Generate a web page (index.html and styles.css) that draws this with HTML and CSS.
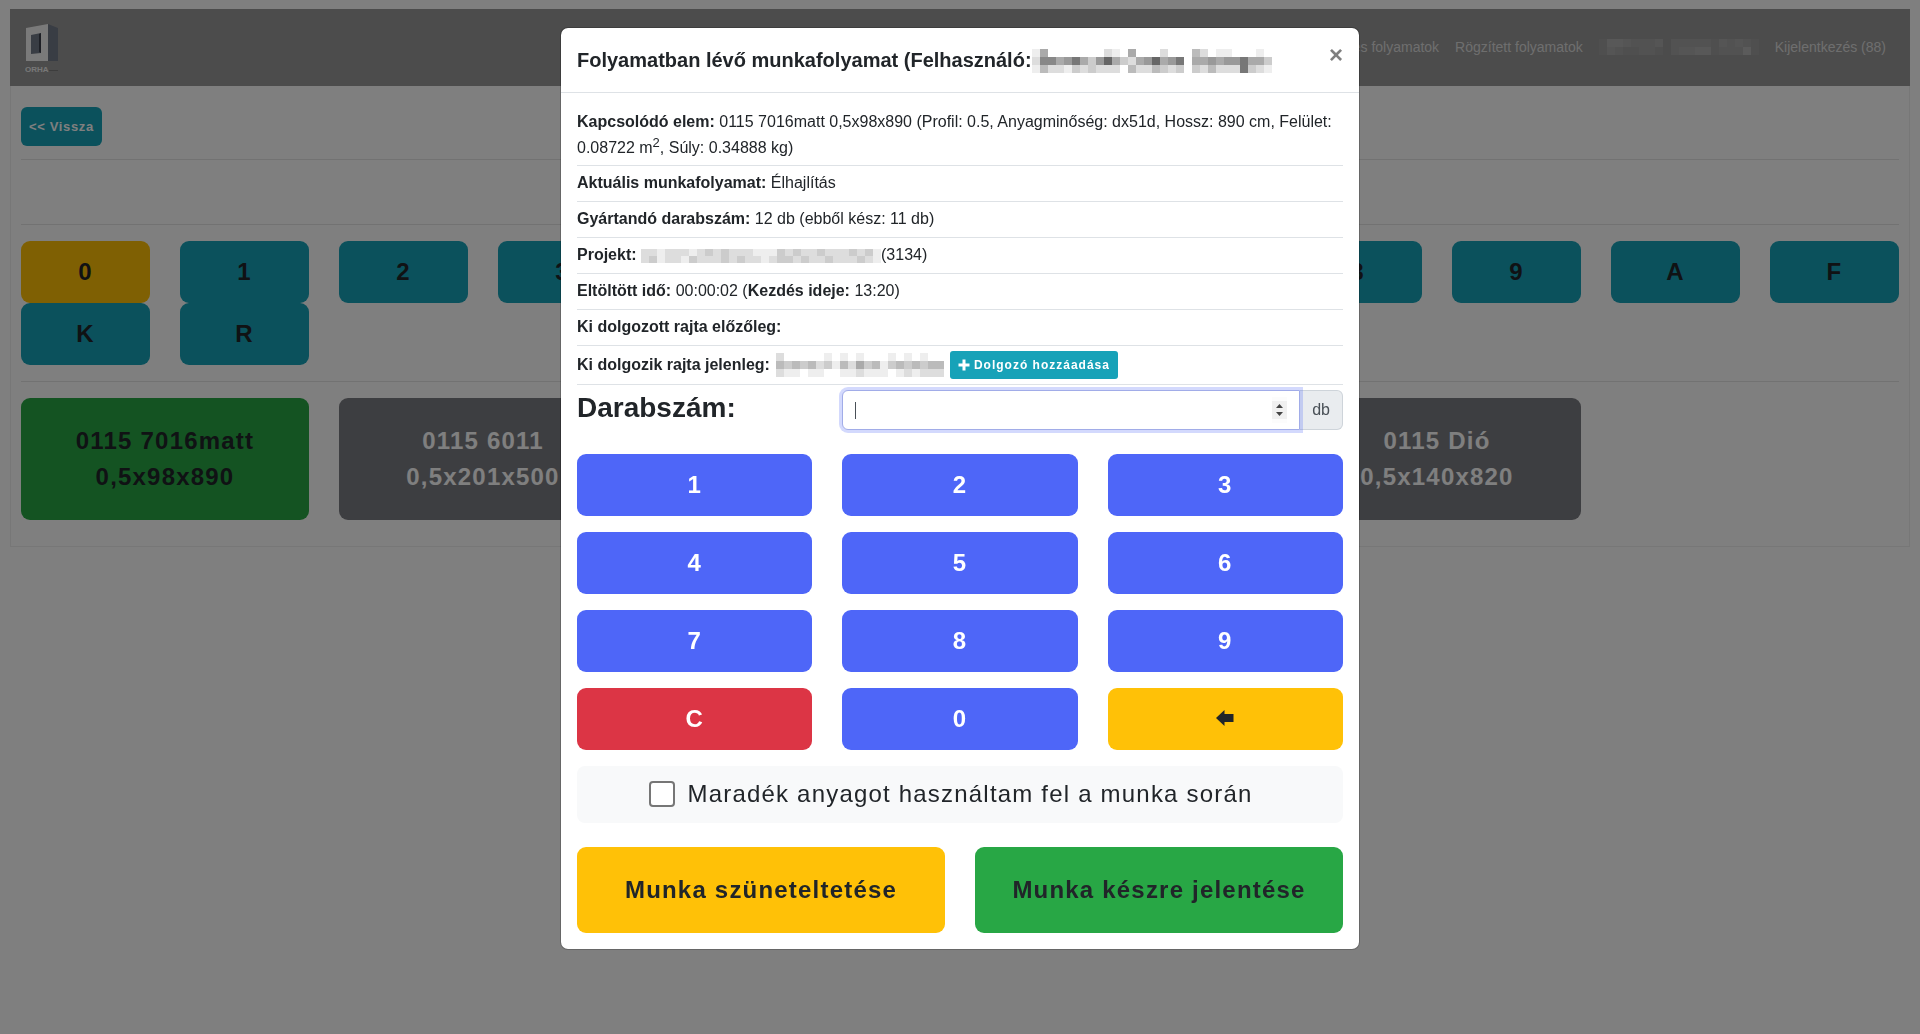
FILE: index.html
```
<!DOCTYPE html>
<html lang="hu">
<head>
<meta charset="utf-8">
<title>ORHA – Folyamatok</title>
<link rel="stylesheet" href="styles.css">
</head>
<body>
<div class="page">
  <header class="navbar">
    <a href="#" class="brand" aria-label="ORHA">
      <svg width="36" height="54" viewBox="0 0 36 54">
        <path fill="#f4f4f4" d="M1 7 23 3v37H1z"/>
        <path fill="#737b88" d="M23 3 33 7v33H23z"/>
        <path fill="#737b88" d="M6 14 16 12v20L6 33z"/>
        <path fill="#3c414d" d="M14 13 16 12v20l-2-1z"/>
        <text x="0" y="51" class="brand-name">ORHA</text>
        <path fill="#7b7b7b" d="M24 49h9v1h-9z"/>
      </svg>
    </a>
    <nav class="nav">
      <a href="#">Függőben lévő és folyamatok</a>
      <a href="#">Rögzített folyamatok</a>
      <svg class="mosaic" width="160" height="16" viewBox="0 0 20 2" preserveAspectRatio="none" data-rows="8bba999a7999998a9a98|8a98899879aabb8999c8" data-mode="nav"></svg>
      <a href="#">Kijelentkezés (88)</a>
    </nav>
  </header>
  <main class="panel">
    <button type="button" class="btn back">&lt;&lt; Vissza</button>
    <hr>
    <div class="spacer"></div>
    <hr class="loose">
    <div class="keys">
      <button type="button" class="btn tile active">0</button>
      <button type="button" class="btn tile">1</button>
      <button type="button" class="btn tile">2</button>
      <button type="button" class="btn tile">3</button>
      <button type="button" class="btn tile">4</button>
      <button type="button" class="btn tile">5</button>
      <button type="button" class="btn tile">6</button>
      <button type="button" class="btn tile">7</button>
      <button type="button" class="btn tile">8</button>
      <button type="button" class="btn tile">9</button>
      <button type="button" class="btn tile">A</button>
      <button type="button" class="btn tile">F</button>
      <button type="button" class="btn tile">K</button>
      <button type="button" class="btn tile">R</button>
    </div>
    <hr class="loose">
    <div class="jobs">
      <button type="button" class="btn job current">0115 7016matt<br>0,5x98x890</button>
      <button type="button" class="btn job">0115 6011<br>0,5x201x500</button>
      <button type="button" class="btn job">0115 6011<br>0,5x201x500</button>
      <button type="button" class="btn job">0115 Dió<br>0,5x140x820</button>
      <button type="button" class="btn job">0115 Dió<br>0,5x140x820</button>
    </div>
  </main>
</div>

<div class="overlay">
  <div class="modal" role="dialog" aria-modal="true" aria-labelledby="title">
    <div class="modal-head">
      <h5 id="title">Folyamatban lévő munkafolyamat (Felhasználó:</h5>
      <svg class="mosaic" width="240" height="24" viewBox="0 0 30 3" preserveAspectRatio="none" data-rows="eafffffffdefafffdfffbdfeefffef|d88a97ac96acda96a97faa9a997aac|ebddecdcdddfbddbcdcfcdbddd7cde"></svg>
      <button type="button" class="close" aria-label="Bezárás">×</button>
    </div>
    <div class="modal-body">
      <div class="rows">
        <p><b>Kapcsolódó elem:</b> 0115 7016matt 0,5x98x890 (Profil: 0.5, Anyagminőség: dx51d, Hossz: 890 cm, Felület: 0.08722 m<sup>2</sup>, Súly: 0.34888 kg)</p>
        <p><b>Aktuális munkafolyamat:</b> Élhajlítás</p>
        <p><b>Gyártandó darabszám:</b> 12 db (ebből kész: 11 db)</p>
        <p><b>Projekt:</b> <svg class="mosaic" width="240" height="14" viewBox="0 0 30 2" preserveAspectRatio="none" data-rows="ddedddedcdcdddeeecdcddcdddcdce|dceddecdddcdcddedccdcddcdddcde"></svg>(3134)</p>
        <p><b>Eltöltött idő:</b> 00:00:02 (<b>Kezdés ideje:</b> 13:20)</p>
        <p><b>Ki dolgozott rajta előzőleg:</b></p>
        <p class="workers"><b>Ki dolgozik rajta jelenleg:</b>
          <svg class="mosaic" width="168" height="24" viewBox="0 0 21 3" preserveAspectRatio="none" data-rows="dfffffefefefffefefeff|bcbcbdcebdacbecbcbcbb|deefeeffeedeeefededdd"></svg>
          <button type="button" class="btn add"><svg width="12" height="12" viewBox="0 0 12 12"><path fill="#fff" d="M4.500 0.500h3v4H11.500v3H7.500V11.500h-3V7.500H0.500v-3h4z"/></svg>Dolgozó hozzáadása</button></p>
      </div>
      <div class="grid amount">
        <label for="qty">Darabszám:</label>
        <div class="group">
          <div class="field">
            <input id="qty" type="number" autofocus>
            <svg class="spin" width="15" height="18" viewBox="0 0 15 18"><path fill="#f0f0f0" d="M0 0h15v18H0z"/><path fill="#444" d="M4 7h7L7.500 3zM4 11h7l-3.500 4z"/></svg>
          </div>
          <span class="unit">db</span>
        </div>
      </div>
      <div class="grid pad">
        <button type="button" class="btn key">1</button>
        <button type="button" class="btn key">2</button>
        <button type="button" class="btn key">3</button>
        <button type="button" class="btn key">4</button>
        <button type="button" class="btn key">5</button>
        <button type="button" class="btn key">6</button>
        <button type="button" class="btn key">7</button>
        <button type="button" class="btn key">8</button>
        <button type="button" class="btn key">9</button>
        <button type="button" class="btn key clear">C</button>
        <button type="button" class="btn key">0</button>
        <button type="button" class="btn key erase" aria-label="Törlés"><svg width="18" height="18" viewBox="0 0 18 18"><path fill="#212529" d="M0 9 8.500 1v4H17.500v8H8.500v4z"/></svg></button>
      </div>
      <label class="leftover"><input type="checkbox">Maradék anyagot használtam fel a munka során</label>
      <div class="actions">
        <button type="button" class="btn action pause">Munka szüneteltetése</button>
        <button type="button" class="btn action done">Munka készre jelentése</button>
      </div>
    </div>
  </div>
</div>
<script src="script.js"></script>
</body>
</html>
```
FILE: styles.css
```
* { box-sizing: border-box; }
body {
  margin: 0;
  background: #fff;
  color: #212529;
  font: 16px/26px "Liberation Sans", Arial, sans-serif;
}
.page { padding: 9px 10px; }
.navbar {
  display: flex;
  justify-content: space-between;
  align-items: center;
  height: 77px;
  padding: 0 24px 0 15px;
  background: #999;
}
.brand { display: flex; }
.brand-name { font: bold 8px "Liberation Sans", Arial, sans-serif; fill: #eee; }
.nav { display: flex; align-items: center; gap: 16px; padding-bottom: 2px; font-size: 14px; }
.nav a { color: #ddd; text-decoration: none; }
.panel {
  padding: 21px 10px 26px;
  border: 1px solid #eee;
  border-top: 0;
}
hr { height: 1px; margin: 13px 0 0; border: 0; background: #e5e5e5; }
.spacer { height: 48px; }
hr.loose { margin: 16px 0; }
.btn {
  border: 0;
  border-radius: 9px;
  padding: 0;
  font-family: inherit;
  font-weight: bold;
  letter-spacing: .05em;
  color: #fff;
  cursor: pointer;
}
.back { display: block; padding: 0 8px; height: 39px; font-size: 13px; background: #17a2b8; border-radius: 6px; }
.keys, .jobs { display: grid; grid-template-columns: repeat(12, 1fr); column-gap: 30px; }
.tile { height: 62px; font-size: 24px; color: #212529; background: #17a2b8; }
.tile.active { background: #ffc107; }
.job { grid-column: span 2; height: 122px; font-size: 24px; line-height: 36px; background: #7b7c82; }
.job.current { color: #212529; background: #28a745; }

.overlay {
  position: fixed;
  inset: 0;
  overflow: auto;
  padding: 27px 16px;
  background: rgba(0, 0, 0, .5);
}
.modal {
  max-width: 800px;
  margin: 0 auto;
  border: 1px solid rgba(0, 0, 0, .2);
  border-radius: 8px;
  background: #fff;
  background-clip: padding-box;
}
.modal-head {
  display: flex;
  padding: 16px 16px 15px;
  border-bottom: 1px solid #dee2e6;
  align-items: center;
}
h5 { margin: 0; font-size: 20px; line-height: 33px; }
.mosaic { display: inline-block; flex: none; vertical-align: middle; shape-rendering: crispEdges; }
.close {
  margin-left: auto;
  align-self: flex-start;
  border: 0;
  padding: 0;
  background: none;
  color: #7f7f7f;
  font: bold 24px/22px "Liberation Sans", Arial, sans-serif;
}
.modal-body { padding: 16px; }
.rows p { margin: 0; padding: 4px 0 5px; border-bottom: 1px solid #dee2e6; }
.rows p:first-child { padding: 0 0 4px; }
.rows .workers { display: flex; align-items: center; gap: 6px; height: 39px; }
sup { font-size: 13px; line-height: 0; }
.add {
  display: flex;
  align-items: center;
  gap: 4px;
  height: 28px;
  padding: 0 8px;
  font-size: 12px;
  letter-spacing: 1px;
  background: #17a2b8;
  border-radius: 3px;
}
.grid { display: grid; grid-template-columns: repeat(3, 1fr); column-gap: 30px; }
.amount { padding-top: 5px; }
.amount label { font-size: 28px; font-weight: bold; line-height: 36px; }
.group { grid-column: span 2; display: flex; height: 40px; }
.field { position: relative; flex: 1; display: flex; z-index: 1; }
.field input {
  flex: 1;
  min-width: 0;
  padding: 6px 12px;
  border: 1px solid #a1ace8;
  border-radius: 6px 0 0 6px;
  font: inherit;
  color: #495057;
  outline: 0;
  box-shadow: 0 0 0 3px rgba(78, 102, 248, .25);
  background: linear-gradient(#495057, #495057) 12px 50% / 1px 17px no-repeat #fff;
  caret-color: transparent;
  appearance: textfield;
}
.spin { position: absolute; right: 13px; top: 11px; pointer-events: none; }
.unit {
  padding: 6px 12px;
  border: 1px solid #ced4da;
  border-left: 0;
  border-radius: 0 6px 6px 0;
  color: #495057;
  background: #e9ecef;
}
.pad { padding-top: 24px; row-gap: 16px; }
.key { height: 62px; font-size: 24px; background: #4e66f8; }
.key.clear { background: #dc3545; }
.key.erase { background: #ffc107; }
.leftover {
  display: flex;
  align-items: center;
  justify-content: center;
  gap: 12px;
  height: 57px;
  margin-top: 16px;
  padding: 0 18px 2px 0;
  border-radius: 8px;
  font-size: 24px;
  letter-spacing: .05em;
  background: #f8f9fa;
}
.leftover input {
  appearance: none;
  width: 26px;
  height: 26px;
  margin: 0;
  border: 2px solid #767676;
  border-radius: 4px;
  background: #fff;
}
.leftover input:checked { background: #4e66f8; }
.actions { display: grid; grid-template-columns: 1fr 1fr; gap: 30px; margin-top: 24px; }
.action { height: 86px; font-size: 24px; color: #212529; }
.pause { background: #ffc107; }
.done { background: #28a745; }
```
FILE: script.js
```
// Fills the masked names with square cells; each hex digit is a grey level.
document.querySelectorAll('.mosaic').forEach(function (svg) {
  svg.dataset.rows.split('|').forEach(function (row, y) {
    Array.from(row).forEach(function (level, x) {
      var cell = document.createElementNS('http://www.w3.org/2000/svg', 'rect');
      var v = svg.dataset.mode === 'nav' ? 153 + (parseInt(level, 16) - 7) * 6 : parseInt(level, 16) * 17;
      cell.setAttribute('x', x);
      cell.setAttribute('y', y);
      cell.setAttribute('width', 1);
      cell.setAttribute('height', 1);
      cell.setAttribute('fill', 'rgb(' + v + ',' + v + ',' + v + ')');
      svg.appendChild(cell);
    });
  });
});
```
